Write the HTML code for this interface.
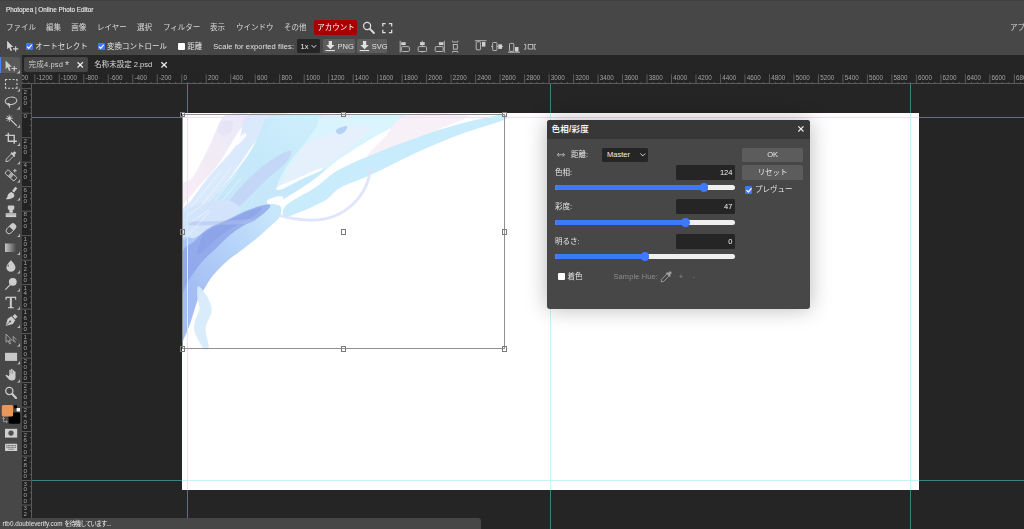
<!DOCTYPE html><html lang="ja"><head><meta charset="utf-8"><title>Photopea | Online Photo Editor</title><style>
*{box-sizing:border-box;margin:0;padding:0}
html,body{width:1024px;height:529px;overflow:hidden;background:#252525}
body{position:relative;font-family:"Liberation Sans","Noto Sans CJK JP",sans-serif;color:#e4e4e4;font-size:7.5px;line-height:1}
.abs{position:absolute}
#root{position:absolute;left:0;top:0;width:1024px;height:529px;overflow:hidden;filter:blur(0.01px)}
#top{position:absolute;left:0;top:0;width:1024px;height:54.5px;background:#474747}
#topline{position:absolute;left:0;top:0;width:1024px;height:1px;background:#404040}
#title{position:absolute;left:6px;top:6.8px;font-size:6.35px;color:#ebebeb;white-space:nowrap;-webkit-text-stroke:0.120px #ebebeb}
.mi{position:absolute;top:23.5px;font-size:7.5px;white-space:nowrap;color:#d8d8d8}
#acct{position:absolute;left:314px;top:20.400px;width:43.200px;height:15.100px;background:#a80000;border-radius:2px}
.opt{position:absolute;top:42.600px;font-size:7.5px;white-space:nowrap;color:#e2e2e2}
.cb{position:absolute;width:7px;height:7px;border-radius:1px;background:#fff}
.cb.on{background:#3b78f5}
.btn{position:absolute;background:#5c5c5c;border-radius:1.5px}
.sel{position:absolute;background:#252525;border-radius:1.5px}
#tools{position:absolute;left:0;top:54.5px;width:22px;height:475px;background:#474747}
#work{position:absolute;left:22px;top:54.5px;width:1002px;height:475px;background:#252525;border-top-left-radius:3px}
.tab{position:absolute;top:57px;height:15.2px;border-radius:2px;font-size:7.5px;white-space:nowrap}
.rl{position:absolute;font-size:6.3px;color:#a2a2a2;white-space:nowrap;line-height:1}
.gv{position:absolute;width:1px;background:#3c8286}
.gh{position:absolute;height:1px;background:#3c8286}
.h{position:absolute;width:5.3px;height:5.3px;border:0.7px solid #7c7c7c}
#dlg{position:absolute;left:547.2px;top:120px;width:262.8px;height:189.4px;background:#474747;border-radius:3px;box-shadow:0 0 21px rgba(0,0,0,.28)}
#dlgt{position:absolute;left:0;top:0;width:100%;height:18.6px;background:#373737;border-radius:3px 3px 0 0}
.dl{position:absolute;font-size:7.5px;white-space:nowrap;color:#e6e6e6}
.inp{position:absolute;left:128.8px;width:59px;height:15px;background:#252525;border-radius:1.5px}
.inp span{position:absolute;right:2.6px;top:4px;font-size:7.5px;color:#f0f0f0}
.trk{position:absolute;left:7.8px;width:180px;height:5px;border-radius:2.5px;background:#efefef}
.trk i{position:absolute;left:0;top:0;height:5px;border-radius:2.5px;background:#3f79fb}
.trk b{position:absolute;top:-1.9px;width:8.8px;height:8.8px;border-radius:50%;background:#3f79fb}
#status{position:absolute;left:0;top:517.5px;width:480.5px;height:12px;background:#474747;border-top-right-radius:3px;font-size:6.6px;color:#e8e8e8;white-space:nowrap}
</style></head><body><div id="root">
<div id="work"></div>
<div class="abs" id="cv" style="left:182.2px;top:113.2px;width:736.8px;height:376.5px;background:#fff;overflow:hidden">
<svg class="abs" style="left:0;top:0" width="736.8" height="376.5" viewBox="182.2 113.2 736.8 376.5">
<defs><filter id="b1" x="-10%" y="-10%" width="120%" height="120%"><feGaussianBlur stdDeviation="0.6"/></filter><filter id="b2" x="-20%" y="-20%" width="140%" height="140%"><feGaussianBlur stdDeviation="2.5"/></filter>
<linearGradient id="gA" x1="0" y1="1" x2="1" y2="0"><stop offset="0" stop-color="#c4e2fa"/><stop offset="0.5" stop-color="#c3e8fa"/><stop offset="1" stop-color="#d0f2fd"/></linearGradient>
<linearGradient id="gP" x1="0" y1="1" x2="1" y2="0"><stop offset="0" stop-color="#f8ebf3"/><stop offset="1" stop-color="#e6e7f8"/></linearGradient>
</defs>
<g filter="url(#b1)">
<path d="M226.5 115.0C231.8 113.2 248.7 111.7 250.4 115.0C252.1 118.3 242.0 126.7 236.7 135.0C231.4 143.2 224.6 156.1 218.6 164.5C212.5 172.8 205.7 178.8 200.4 184.9C195.1 191.0 189.8 197.4 186.8 200.8C183.9 204.2 183.4 208.0 182.7 205.3C182.0 202.7 181.1 189.4 182.7 184.9C184.4 180.4 189.3 181.9 192.5 178.1C195.6 174.3 198.5 167.9 201.6 162.2C204.6 156.5 207.8 150.1 210.6 144.0C213.5 138.0 215.9 130.7 218.6 125.9C221.2 121.0 221.2 116.8 226.5 115.0Z" fill="url(#gP)" fill-opacity="0.9" />
<path d="M248.1 115.0C254.5 110.7 276.1 110.9 277.6 115.0C279.1 119.1 264.0 130.5 257.2 139.5C250.4 148.5 243.5 159.6 236.7 169.0C229.9 178.5 223.1 187.9 216.3 196.2C209.5 204.6 201.5 213.6 195.9 218.9C190.3 224.2 184.9 229.5 182.7 228.0C180.5 226.5 181.3 214.4 182.7 209.9C184.2 205.3 188.0 204.9 191.3 200.8C194.7 196.6 198.9 189.8 202.7 184.9C206.5 180.0 210.3 175.6 214.0 171.3C217.8 166.9 221.2 163.9 225.4 158.8C229.6 153.7 235.2 147.9 239.0 140.6C242.8 133.3 241.7 119.3 248.1 115.0Z" fill="#d8e8fb" fill-opacity="0.95" />
<path d="M270.8 115.0C278.7 111.7 289.9 115.0 307.1 115.0C324.3 115.0 357.4 115.0 374.0 115.0C390.7 115.0 403.5 113.2 407.0 115.0C410.4 116.8 400.0 122.2 394.5 125.9C389.0 129.6 383.1 131.8 374.0 137.2C365.0 142.7 349.6 152.0 340.0 158.8C330.4 165.6 324.7 171.8 316.2 178.1C307.7 184.3 297.3 191.0 288.9 196.2C280.6 201.5 274.9 206.1 266.2 209.9C257.5 213.6 246.6 215.6 236.7 218.9C226.9 222.3 216.2 228.2 207.2 230.1C198.2 231.9 186.8 231.2 182.7 230.1C178.6 229.0 179.4 226.8 182.7 223.5C186.1 220.1 195.6 216.3 202.7 209.9C209.8 203.4 217.8 194.0 225.4 184.9C233.0 175.8 242.4 163.7 248.1 155.4C253.8 147.1 255.7 141.7 259.4 135.0C263.2 128.2 262.8 118.3 270.8 115.0Z" fill="url(#gA)" fill-opacity="0.95" />
<path d="M325.3 115.0C334.9 112.8 360.4 115.0 374.0 115.0C387.7 115.0 403.5 113.2 407.0 115.0C410.4 116.8 400.0 122.2 394.5 125.9C389.0 129.6 383.1 131.8 374.0 137.2C365.0 142.7 348.1 153.4 340.0 158.8C331.9 164.2 332.3 165.8 325.3 169.5C318.3 173.1 306.0 177.7 298.0 180.8C290.1 184.0 279.5 190.6 277.6 188.3C275.7 186.0 282.5 173.7 286.7 166.7C290.8 159.7 297.6 152.7 302.6 146.3C307.5 139.9 312.4 133.4 316.2 128.2C320.0 122.9 315.6 117.2 325.3 115.0Z" fill="#dbf5fd" fill-opacity="0.9" />
<path d="M307.1 144.0C313.9 139.1 326.6 135.7 334.3 132.7C342.1 129.7 347.8 126.3 353.6 125.9C359.5 125.5 371.8 125.5 369.5 130.4C367.2 135.3 348.1 148.9 340.0 155.4C331.9 161.9 329.2 164.8 320.7 169.5C312.2 174.1 295.8 180.1 288.9 183.1C282.1 186.0 279.1 190.6 279.9 187.2C280.6 183.7 288.9 169.4 293.5 162.2C298.0 155.0 300.3 149.0 307.1 144.0Z" fill="#e8effc" fill-opacity="0.75" />
<path d="M336.6 130.0C337.9 128.6 345.4 126.1 346.8 126.3C348.3 126.6 346.6 130.2 345.2 131.6C343.9 132.9 340.3 134.8 338.9 134.5C337.4 134.2 335.3 131.3 336.6 130.0Z" fill="#a9c9f2" fill-opacity="0.8" />
<path d="M218.6 123.6C220.5 121.3 230.1 119.8 232.2 121.3C234.3 122.9 233.0 130.4 231.1 132.7C229.2 135.0 222.9 136.5 220.9 135.0C218.8 133.5 216.7 125.9 218.6 123.6Z" fill="#dcdcf5" fill-opacity="0.4" />
<path d="M291.2 150.9C293.1 151.6 290.8 157.3 286.7 162.2C282.5 167.1 272.7 174.3 266.2 180.4C259.8 186.4 253.8 193.2 248.1 198.5C242.4 203.8 236.0 210.6 232.2 212.1C228.4 213.6 224.3 211.4 225.4 207.6C226.5 203.8 233.7 195.5 239.0 189.4C244.3 183.4 251.1 176.6 257.2 171.3C263.2 166.0 269.7 161.1 275.3 157.7C281.0 154.3 289.3 150.1 291.2 150.9Z" fill="#c3ccf4" fill-opacity="0.6" />
<g stroke="#fff" stroke-opacity="0.5" stroke-width="0.9" fill="none"><path d="M193.6 216.7L232.2 166.7"/><path d="M200.4 218.9L236.7 173.5"/><path d="M189.1 209.9L220.9 171.3"/><path d="M209.5 216.7L241.3 178.1"/></g>
<path d="M407.0 115.4C420.6 111.8 461.2 113.3 467.1 115.4C473.0 117.6 452.0 123.8 442.1 128.2C432.3 132.5 417.5 138.0 408.1 141.8C398.6 145.6 392.2 148.4 385.4 150.9C378.6 153.3 367.2 158.8 367.2 156.5C367.2 154.3 378.8 144.1 385.4 137.2C392.0 130.4 393.3 119.1 407.0 115.4Z" fill="#f8eff7" fill-opacity="0.95" />
<path d="M286.7 205.3C292.0 200.4 307.3 193.1 316.2 187.2C325.1 181.2 328.5 175.7 340.0 169.5C351.5 163.2 368.4 156.4 385.4 149.7C402.4 143.0 425.5 134.6 442.1 129.3C458.8 124.0 475.0 120.3 485.3 117.9C495.5 115.6 500.8 114.6 503.9 115.0C507.0 115.4 511.5 116.8 503.9 120.2C496.2 123.6 472.8 129.9 458.0 135.4C443.2 141.0 429.7 146.8 414.9 153.6C400.1 160.3 382.0 170.0 369.5 175.8C357.0 181.6 347.4 184.1 340.0 188.3C332.6 192.5 332.3 196.6 325.3 200.8C318.3 204.9 304.8 210.6 298.0 213.3C291.2 215.9 286.3 218.0 284.4 216.7C282.5 215.3 281.4 210.2 286.7 205.3Z" fill="#c6ebfb" fill-opacity="0.97" />
<path d="M277.6 187.2C280.4 185.2 291.0 181.2 298.0 178.1C305.0 175.0 315.8 169.8 319.6 168.6C323.4 167.3 323.6 169.0 320.7 170.8C317.9 172.6 309.2 176.0 302.6 179.2C295.9 182.4 285.2 188.6 281.0 189.9C276.8 191.2 274.8 189.1 277.6 187.2Z" fill="#ffffff" fill-opacity="0.9" />
<path d="M267.4 200.8C268.7 198.9 277.2 196.4 279.9 196.2C282.5 196.1 284.6 197.8 283.3 199.7C281.9 201.5 274.6 207.4 271.9 207.6C269.3 207.8 266.1 202.7 267.4 200.8Z" fill="#ffffff" fill-opacity="0.9" />
<path d="M234.5 141.8C235.6 139.9 242.7 134.8 244.7 133.8C246.7 132.9 247.4 134.2 246.3 136.1C245.1 138.0 239.8 144.2 237.9 145.2C235.9 146.1 233.3 143.7 234.5 141.8Z" fill="#ffffff" fill-opacity="0.85" />
<path d="M370.7 167C369 195 345 221 311 220.3C298 220 288 218 279.5 215.5" fill="none" stroke="#dde4fa" stroke-width="2.8" stroke-opacity="0.95"/>
<path d="M182.0 215.0C185.0 207.5 192.8 207.5 200.0 205.0C207.2 202.5 218.3 199.2 225.0 200.0C231.7 200.8 241.7 205.3 240.0 210.0C238.3 214.7 222.5 223.0 215.0 228.0C207.5 233.0 200.5 236.3 195.0 240.0C189.5 243.7 184.2 254.2 182.0 250.0C179.8 245.8 179.0 222.5 182.0 215.0Z" fill="#d3e4fb" fill-opacity="0.95" />
<linearGradient id="gM" gradientUnits="userSpaceOnUse" x1="190" y1="290" x2="275" y2="215"><stop offset="0" stop-color="#9fb9f2"/><stop offset="0.6" stop-color="#b3d4f9"/><stop offset="1" stop-color="#c6e6fb"/></linearGradient>
<path d="M182.0 246.0C184.2 229.2 189.5 241.2 195.0 238.0C200.5 234.8 207.5 230.9 215.0 227.0C222.5 223.1 232.2 218.2 240.0 214.5C247.8 210.8 255.3 206.4 262.0 205.0C268.7 203.6 277.1 203.9 280.0 206.0C282.9 208.1 281.3 213.8 279.6 217.3C277.9 220.8 274.0 223.2 270.0 227.0C266.0 230.8 260.3 235.8 255.5 239.8C250.7 243.8 245.6 247.5 241.0 251.0C236.4 254.5 232.6 256.7 228.0 260.7C223.4 264.7 217.6 270.3 213.7 275.0C209.8 279.7 207.1 285.1 204.6 289.0C202.1 292.9 200.7 293.2 198.4 298.7C196.1 304.2 193.4 315.3 191.0 322.0C188.6 328.7 185.5 336.2 184.0 339.0C182.5 341.8 182.3 354.5 182.0 339.0C181.7 323.5 179.8 262.8 182.0 246.0Z" fill="url(#gM)" fill-opacity="0.95" />
<path d="M182.2 254.0C184.2 245.6 190.3 245.5 194.5 241.4C198.7 237.3 201.7 233.0 207.3 229.4C212.9 225.8 221.2 222.9 228.2 219.7C235.1 216.5 242.6 212.5 249.0 210.0C255.4 207.5 263.2 205.2 266.7 204.8C270.2 204.4 271.6 205.3 270.0 207.7C268.4 210.1 261.8 215.7 257.0 219.0C252.2 222.3 245.8 224.5 241.0 227.5C236.2 230.5 232.5 233.3 228.2 237.0C223.9 240.7 219.3 245.6 215.3 249.4C211.3 253.2 207.2 256.6 204.0 260.0C200.8 263.4 198.7 266.3 196.0 270.0C193.3 273.7 190.3 278.3 188.0 282.0C185.7 285.7 183.2 296.7 182.2 292.0C181.2 287.3 180.1 262.4 182.2 254.0Z" fill="#8a9fe8" fill-opacity="0.72" />
<path d="M207.3 231.0C212.0 227.3 221.2 224.2 228.2 221.0C235.1 217.8 243.4 213.8 249.0 211.5C254.6 209.2 261.0 206.8 262.0 207.5C263.0 208.2 259.0 213.1 255.0 216.0C251.0 218.9 243.5 221.8 238.0 225.0C232.5 228.2 227.0 231.3 222.0 235.0C217.0 238.7 212.0 243.7 208.0 247.0C204.0 250.3 199.3 255.7 198.0 255.0C196.7 254.3 198.4 247.0 200.0 243.0C201.6 239.0 202.6 234.7 207.3 231.0Z" fill="#7f94e4" fill-opacity="0.35" />
<path d="M190.0 222.0C193.8 221.3 206.7 221.8 215.0 221.5C223.3 221.2 233.2 220.4 240.0 220.0C246.8 219.6 254.3 218.4 256.0 219.0C257.7 219.6 255.2 222.5 250.0 223.5C244.8 224.5 234.7 224.7 225.0 225.0C215.3 225.3 197.8 226.0 192.0 225.5C186.2 225.0 186.2 222.7 190.0 222.0Z" fill="#aebff0" fill-opacity="0.5" />
<g stroke="#fff" stroke-opacity="0.6" stroke-width="0.8" fill="none"><path d="M189.1 223.5L209.5 209.9"/><path d="M186.8 216.7L205.0 203.1"/><path d="M184.0 240.0L210.0 212.0"/></g>
<path d="M198.4 286.4C200.0 286.0 204.8 292.2 207.0 296.3C209.3 300.3 212.1 305.7 211.9 311.0C211.7 316.3 206.3 322.1 205.8 328.2C205.3 334.3 209.4 344.1 209.0 347.4C208.6 350.6 205.6 350.2 203.3 347.9C201.0 345.5 196.7 337.2 195.2 333.1C193.8 329.0 194.0 327.4 194.7 323.3C195.5 319.2 199.2 312.6 199.7 308.5C200.1 304.4 197.9 302.4 197.7 298.7C197.5 295.0 196.9 286.8 198.4 286.4Z" fill="#d6ebfb" fill-opacity="0.95" />
</g></svg>
</div>
<div class="abs" style="left:22px;top:73.4px;width:1002px;height:10.4px;background:#242424;border-bottom:0.8px solid #5a5a5a"></div>
<div class="abs" style="left:22px;top:83.8px;width:9.6px;height:446px;background:#222;border-right:0.8px solid #5a5a5a"></div>
<svg class="abs" style="left:0;top:0" width="1024" height="529">
<path d="M22.58 82V83.6M28.70 82V83.6M34.82 74.3V83.6M40.94 82V83.6M47.07 82V83.6M53.19 82V83.6M59.31 74.3V83.6M65.43 82V83.6M71.55 82V83.6M77.68 82V83.6M83.80 74.3V83.6M89.92 82V83.6M96.04 82V83.6M102.16 82V83.6M108.29 74.3V83.6M114.41 82V83.6M120.53 82V83.6M126.65 82V83.6M132.77 74.3V83.6M138.90 82V83.6M145.02 82V83.6M151.14 82V83.6M157.26 74.3V83.6M163.38 82V83.6M169.51 82V83.6M175.63 82V83.6M181.75 74.3V83.6M187.87 82V83.6M193.99 82V83.6M200.12 82V83.6M206.24 74.3V83.6M212.36 82V83.6M218.48 82V83.6M224.60 82V83.6M230.73 74.3V83.6M236.85 82V83.6M242.97 82V83.6M249.09 82V83.6M255.21 74.3V83.6M261.34 82V83.6M267.46 82V83.6M273.58 82V83.6M279.70 74.3V83.6M285.82 82V83.6M291.95 82V83.6M298.07 82V83.6M304.19 74.3V83.6M310.31 82V83.6M316.43 82V83.6M322.56 82V83.6M328.68 74.3V83.6M334.80 82V83.6M340.92 82V83.6M347.04 82V83.6M353.17 74.3V83.6M359.29 82V83.6M365.41 82V83.6M371.53 82V83.6M377.65 74.3V83.6M383.78 82V83.6M389.90 82V83.6M396.02 82V83.6M402.14 74.3V83.6M408.26 82V83.6M414.39 82V83.6M420.51 82V83.6M426.63 74.3V83.6M432.75 82V83.6M438.87 82V83.6M445.00 82V83.6M451.12 74.3V83.6M457.24 82V83.6M463.36 82V83.6M469.48 82V83.6M475.61 74.3V83.6M481.73 82V83.6M487.85 82V83.6M493.97 82V83.6M500.09 74.3V83.6M506.22 82V83.6M512.34 82V83.6M518.46 82V83.6M524.58 74.3V83.6M530.70 82V83.6M536.83 82V83.6M542.95 82V83.6M549.07 74.3V83.6M555.19 82V83.6M561.31 82V83.6M567.44 82V83.6M573.56 74.3V83.6M579.68 82V83.6M585.80 82V83.6M591.92 82V83.6M598.05 74.3V83.6M604.17 82V83.6M610.29 82V83.6M616.41 82V83.6M622.53 74.3V83.6M628.66 82V83.6M634.78 82V83.6M640.90 82V83.6M647.02 74.3V83.6M653.14 82V83.6M659.27 82V83.6M665.39 82V83.6M671.51 74.3V83.6M677.63 82V83.6M683.75 82V83.6M689.88 82V83.6M696.00 74.3V83.6M702.12 82V83.6M708.24 82V83.6M714.36 82V83.6M720.49 74.3V83.6M726.61 82V83.6M732.73 82V83.6M738.85 82V83.6M744.97 74.3V83.6M751.10 82V83.6M757.22 82V83.6M763.34 82V83.6M769.46 74.3V83.6M775.58 82V83.6M781.71 82V83.6M787.83 82V83.6M793.95 74.3V83.6M800.07 82V83.6M806.19 82V83.6M812.32 82V83.6M818.44 74.3V83.6M824.56 82V83.6M830.68 82V83.6M836.80 82V83.6M842.93 74.3V83.6M849.05 82V83.6M855.17 82V83.6M861.29 82V83.6M867.41 74.3V83.6M873.54 82V83.6M879.66 82V83.6M885.78 82V83.6M891.90 74.3V83.6M898.02 82V83.6M904.15 82V83.6M910.27 82V83.6M916.39 74.3V83.6M922.51 82V83.6M928.63 82V83.6M934.76 82V83.6M940.88 74.3V83.6M947.00 82V83.6M953.12 82V83.6M959.24 82V83.6M965.37 74.3V83.6M971.49 82V83.6M977.61 82V83.6M983.73 82V83.6M989.85 74.3V83.6M995.98 82V83.6M1002.10 82V83.6M1008.22 82V83.6M1014.34 74.3V83.6M1020.46 82V83.6" stroke="#686868" stroke-width="0.8" fill="none"/>
<path d="M22 88.71H31.4M29.8 94.83H31.4M29.8 100.96H31.4M29.8 107.08H31.4M22 113.20H31.4M29.8 119.32H31.4M29.8 125.44H31.4M29.8 131.57H31.4M22 137.69H31.4M29.8 143.81H31.4M29.8 149.93H31.4M29.8 156.05H31.4M22 162.18H31.4M29.8 168.30H31.4M29.8 174.42H31.4M29.8 180.54H31.4M22 186.66H31.4M29.8 192.79H31.4M29.8 198.91H31.4M29.8 205.03H31.4M22 211.15H31.4M29.8 217.27H31.4M29.8 223.40H31.4M29.8 229.52H31.4M22 235.64H31.4M29.8 241.76H31.4M29.8 247.88H31.4M29.8 254.01H31.4M22 260.13H31.4M29.8 266.25H31.4M29.8 272.37H31.4M29.8 278.49H31.4M22 284.62H31.4M29.8 290.74H31.4M29.8 296.86H31.4M29.8 302.98H31.4M22 309.10H31.4M29.8 315.23H31.4M29.8 321.35H31.4M29.8 327.47H31.4M22 333.59H31.4M29.8 339.71H31.4M29.8 345.84H31.4M29.8 351.96H31.4M22 358.08H31.4M29.8 364.20H31.4M29.8 370.32H31.4M29.8 376.45H31.4M22 382.57H31.4M29.8 388.69H31.4M29.8 394.81H31.4M29.8 400.93H31.4M22 407.06H31.4M29.8 413.18H31.4M29.8 419.30H31.4M29.8 425.42H31.4M22 431.54H31.4M29.8 437.67H31.4M29.8 443.79H31.4M29.8 449.91H31.4M22 456.03H31.4M29.8 462.15H31.4M29.8 468.28H31.4M29.8 474.40H31.4M22 480.52H31.4M29.8 486.64H31.4M29.8 492.76H31.4M29.8 498.89H31.4M22 505.01H31.4M29.8 511.13H31.4" stroke="#686868" stroke-width="0.8" fill="none"/>
</svg>
<div class="abs" style="left:22px;top:73.4px;width:1002px;height:10px;overflow:hidden">
<div class="rl" style="left:-9.97px;top:1.3px">-1400</div>
<div class="rl" style="left:14.52px;top:1.3px">-1200</div>
<div class="rl" style="left:39.01px;top:1.3px">-1000</div>
<div class="rl" style="left:63.50px;top:1.3px">-800</div>
<div class="rl" style="left:87.99px;top:1.3px">-600</div>
<div class="rl" style="left:112.47px;top:1.3px">-400</div>
<div class="rl" style="left:136.96px;top:1.3px">-200</div>
<div class="rl" style="left:161.45px;top:1.3px">0</div>
<div class="rl" style="left:185.94px;top:1.3px">200</div>
<div class="rl" style="left:210.43px;top:1.3px">400</div>
<div class="rl" style="left:234.91px;top:1.3px">600</div>
<div class="rl" style="left:259.40px;top:1.3px">800</div>
<div class="rl" style="left:283.89px;top:1.3px">1000</div>
<div class="rl" style="left:308.38px;top:1.3px">1200</div>
<div class="rl" style="left:332.87px;top:1.3px">1400</div>
<div class="rl" style="left:357.35px;top:1.3px">1600</div>
<div class="rl" style="left:381.84px;top:1.3px">1800</div>
<div class="rl" style="left:406.33px;top:1.3px">2000</div>
<div class="rl" style="left:430.82px;top:1.3px">2200</div>
<div class="rl" style="left:455.31px;top:1.3px">2400</div>
<div class="rl" style="left:479.79px;top:1.3px">2600</div>
<div class="rl" style="left:504.28px;top:1.3px">2800</div>
<div class="rl" style="left:528.77px;top:1.3px">3000</div>
<div class="rl" style="left:553.26px;top:1.3px">3200</div>
<div class="rl" style="left:577.75px;top:1.3px">3400</div>
<div class="rl" style="left:602.23px;top:1.3px">3600</div>
<div class="rl" style="left:626.72px;top:1.3px">3800</div>
<div class="rl" style="left:651.21px;top:1.3px">4000</div>
<div class="rl" style="left:675.70px;top:1.3px">4200</div>
<div class="rl" style="left:700.19px;top:1.3px">4400</div>
<div class="rl" style="left:724.67px;top:1.3px">4600</div>
<div class="rl" style="left:749.16px;top:1.3px">4800</div>
<div class="rl" style="left:773.65px;top:1.3px">5000</div>
<div class="rl" style="left:798.14px;top:1.3px">5200</div>
<div class="rl" style="left:822.63px;top:1.3px">5400</div>
<div class="rl" style="left:847.11px;top:1.3px">5600</div>
<div class="rl" style="left:871.60px;top:1.3px">5800</div>
<div class="rl" style="left:896.09px;top:1.3px">6000</div>
<div class="rl" style="left:920.58px;top:1.3px">6200</div>
<div class="rl" style="left:945.07px;top:1.3px">6400</div>
<div class="rl" style="left:969.55px;top:1.3px">6600</div>
<div class="rl" style="left:994.04px;top:1.3px">6800</div>
</div>
<div class="rl" style="left:23.6px;top:88.91px;font-size:6.2px">2</div>
<div class="rl" style="left:23.6px;top:94.56px;font-size:6.2px">0</div>
<div class="rl" style="left:23.6px;top:100.21px;font-size:6.2px">0</div>
<div class="rl" style="left:23.6px;top:113.40px;font-size:6.2px">0</div>
<div class="rl" style="left:23.6px;top:137.89px;font-size:6.2px">2</div>
<div class="rl" style="left:23.6px;top:143.54px;font-size:6.2px">0</div>
<div class="rl" style="left:23.6px;top:149.19px;font-size:6.2px">0</div>
<div class="rl" style="left:23.6px;top:162.38px;font-size:6.2px">4</div>
<div class="rl" style="left:23.6px;top:168.03px;font-size:6.2px">0</div>
<div class="rl" style="left:23.6px;top:173.68px;font-size:6.2px">0</div>
<div class="rl" style="left:23.6px;top:186.86px;font-size:6.2px">6</div>
<div class="rl" style="left:23.6px;top:192.51px;font-size:6.2px">0</div>
<div class="rl" style="left:23.6px;top:198.16px;font-size:6.2px">0</div>
<div class="rl" style="left:23.6px;top:211.35px;font-size:6.2px">8</div>
<div class="rl" style="left:23.6px;top:217.00px;font-size:6.2px">0</div>
<div class="rl" style="left:23.6px;top:222.65px;font-size:6.2px">0</div>
<div class="rl" style="left:23.6px;top:235.84px;font-size:6.2px">1</div>
<div class="rl" style="left:23.6px;top:241.49px;font-size:6.2px">0</div>
<div class="rl" style="left:23.6px;top:247.14px;font-size:6.2px">0</div>
<div class="rl" style="left:23.6px;top:252.79px;font-size:6.2px">0</div>
<div class="rl" style="left:23.6px;top:260.33px;font-size:6.2px">1</div>
<div class="rl" style="left:23.6px;top:265.98px;font-size:6.2px">2</div>
<div class="rl" style="left:23.6px;top:271.63px;font-size:6.2px">0</div>
<div class="rl" style="left:23.6px;top:277.28px;font-size:6.2px">0</div>
<div class="rl" style="left:23.6px;top:284.82px;font-size:6.2px">1</div>
<div class="rl" style="left:23.6px;top:290.47px;font-size:6.2px">4</div>
<div class="rl" style="left:23.6px;top:296.12px;font-size:6.2px">0</div>
<div class="rl" style="left:23.6px;top:301.77px;font-size:6.2px">0</div>
<div class="rl" style="left:23.6px;top:309.30px;font-size:6.2px">1</div>
<div class="rl" style="left:23.6px;top:314.95px;font-size:6.2px">6</div>
<div class="rl" style="left:23.6px;top:320.60px;font-size:6.2px">0</div>
<div class="rl" style="left:23.6px;top:326.25px;font-size:6.2px">0</div>
<div class="rl" style="left:23.6px;top:333.79px;font-size:6.2px">1</div>
<div class="rl" style="left:23.6px;top:339.44px;font-size:6.2px">8</div>
<div class="rl" style="left:23.6px;top:345.09px;font-size:6.2px">0</div>
<div class="rl" style="left:23.6px;top:350.74px;font-size:6.2px">0</div>
<div class="rl" style="left:23.6px;top:358.28px;font-size:6.2px">2</div>
<div class="rl" style="left:23.6px;top:363.93px;font-size:6.2px">0</div>
<div class="rl" style="left:23.6px;top:369.58px;font-size:6.2px">0</div>
<div class="rl" style="left:23.6px;top:375.23px;font-size:6.2px">0</div>
<div class="rl" style="left:23.6px;top:382.77px;font-size:6.2px">2</div>
<div class="rl" style="left:23.6px;top:388.42px;font-size:6.2px">2</div>
<div class="rl" style="left:23.6px;top:394.07px;font-size:6.2px">0</div>
<div class="rl" style="left:23.6px;top:399.72px;font-size:6.2px">0</div>
<div class="rl" style="left:23.6px;top:407.26px;font-size:6.2px">2</div>
<div class="rl" style="left:23.6px;top:412.91px;font-size:6.2px">4</div>
<div class="rl" style="left:23.6px;top:418.56px;font-size:6.2px">0</div>
<div class="rl" style="left:23.6px;top:424.21px;font-size:6.2px">0</div>
<div class="rl" style="left:23.6px;top:431.74px;font-size:6.2px">2</div>
<div class="rl" style="left:23.6px;top:437.39px;font-size:6.2px">6</div>
<div class="rl" style="left:23.6px;top:443.04px;font-size:6.2px">0</div>
<div class="rl" style="left:23.6px;top:448.69px;font-size:6.2px">0</div>
<div class="rl" style="left:23.6px;top:456.23px;font-size:6.2px">2</div>
<div class="rl" style="left:23.6px;top:461.88px;font-size:6.2px">8</div>
<div class="rl" style="left:23.6px;top:467.53px;font-size:6.2px">0</div>
<div class="rl" style="left:23.6px;top:473.18px;font-size:6.2px">0</div>
<div class="rl" style="left:23.6px;top:480.72px;font-size:6.2px">3</div>
<div class="rl" style="left:23.6px;top:486.37px;font-size:6.2px">0</div>
<div class="rl" style="left:23.6px;top:492.02px;font-size:6.2px">0</div>
<div class="rl" style="left:23.6px;top:497.67px;font-size:6.2px">0</div>
<div class="rl" style="left:23.6px;top:505.21px;font-size:6.2px">3</div>
<div class="rl" style="left:23.6px;top:510.86px;font-size:6.2px">2</div>
<div class="gv" style="left:187.0px;top:84px;height:445px"></div>
<div class="gv" style="left:550.0px;top:84px;height:445px"></div>
<div class="gv" style="left:910.4px;top:84px;height:445px"></div>
<div class="gh" style="top:116.9px;left:31.6px;width:993px"></div>
<div class="gh" style="top:480.0px;left:31.6px;width:993px"></div>
<div class="gv" style="left:187.0px;top:113.2px;height:376.5px;background:#c6f4f7"></div>
<div class="gv" style="left:550.0px;top:113.2px;height:376.5px;background:#c6f4f7"></div>
<div class="gv" style="left:910.4px;top:113.2px;height:376.5px;background:#c6f4f7"></div>
<div class="gh" style="top:116.9px;left:182.2px;width:736.8px;background:#c6f4f7"></div>
<div class="gh" style="top:480.0px;left:182.2px;width:736.8px;background:#c6f4f7"></div>
<div class="abs" style="left:182px;top:114.3px;width:322.8px;height:235.2px;border:0.8px solid #909090"></div>
<div class="h" style="left:179.5px;top:112.1px"></div>
<div class="h" style="left:340.6px;top:112.1px"></div>
<div class="h" style="left:501.7px;top:112.1px"></div>
<div class="h" style="left:179.5px;top:229.3px"></div>
<div class="h" style="left:340.6px;top:229.3px"></div>
<div class="h" style="left:501.7px;top:229.3px"></div>
<div class="h" style="left:179.5px;top:346.4px"></div>
<div class="h" style="left:340.6px;top:346.4px"></div>
<div class="h" style="left:501.7px;top:346.4px"></div>
<div class="tab" style="left:24px;width:63.6px;background:#474747"></div>
<div class="tab" style="left:28.6px;top:60.6px;color:#cfcfcf;background:none;letter-spacing:0.15px">完成4.psd <span style="font-size:10.500px;line-height:0;position:relative;top:2.600px;left:-0.300px">*</span></div>
<div class="tab" style="left:94.2px;top:60.600px;color:#dadada;background:none">名称未設定 2.psd</div>
<svg class="abs" style="left:0;top:0" width="200" height="80"><path d="M77.500 62.200l5.400 5.300M82.900 62.200l-5.400 5.300M161.400 62.200l5.400 5.300M166.800 62.200l-5.400 5.300" stroke="#ececec" stroke-width="1.200" fill="none"/></svg>
<div id="top"><div id="topline"></div>
<div id="title">Photopea | Online Photo Editor</div>
<div id="acct"></div>
<div class="mi" style="left:6.0px">ファイル</div>
<div class="mi" style="left:46.0px">編集</div>
<div class="mi" style="left:71.3px">画像</div>
<div class="mi" style="left:97.0px">レイヤー</div>
<div class="mi" style="left:137.0px">選択</div>
<div class="mi" style="left:163.0px">フィルター</div>
<div class="mi" style="left:210.0px">表示</div>
<div class="mi" style="left:236.0px">ウインドウ</div>
<div class="mi" style="left:284.0px">その他</div>
<div class="mi" style="left:317.2px;color:#fff">アカウント</div>
<div class="abs" style="top:23.5px;font-size:7.5px;color:#d8d8d8;white-space:nowrap;left:1010px">アプリ</div>
<div class="cb on" style="left:25.8px;top:43.2px"></div><div class="opt" style="left:35.2px">オートセレクト</div>
<div class="cb on" style="left:97.7px;top:43.2px"></div><div class="opt" style="left:107px">変換コントロール</div>
<div class="cb" style="left:178.2px;top:43.2px"></div><div class="opt" style="left:187.3px">距離</div>
<div class="opt" style="left:213.2px;letter-spacing:0.1px">Scale for exported files:</div>
<div class="sel" style="left:296.6px;top:39px;width:23.6px;height:14.4px"></div><div class="opt" style="left:300.5px;color:#f0f0f0">1x</div>
<div class="btn" style="left:323px;top:39px;width:31.8px;height:14.4px"></div><div class="opt" style="left:337.5px;color:#e0e0e0">PNG</div>
<div class="btn" style="left:357.4px;top:39px;width:29.8px;height:14.4px"></div><div class="opt" style="left:371.7px;color:#e0e0e0">SVG</div>
<svg class="abs" style="left:0;top:0" width="1024" height="55" viewBox="0 0 1024 55">
<!-- move tool icon -->
<g fill="#d2d2d2" stroke="none">
<path d="M7.1 40.7v8.6l2-1.8 1.5 3.6 1.5-.65-1.5-3.5h2.7z"/>
<path d="M15.1 46.2h1.1v2.1h2.1v1.1h-2.1v2.1h-1.1v-2.1h-2.1v-1.1h2.1z"/>
</g>
<!-- check marks -->
<g fill="none" stroke="#fff" stroke-width="1.15" stroke-linecap="round" stroke-linejoin="round">
<path d="M27.3 46.8l1.5 1.5 2.7-3.2"/>
<path d="M99.2 46.8l1.5 1.5 2.7-3.2"/>
</g>
<!-- select chevron -->
<path d="M311.6 45.2l2.3 2.3 2.3-2.3" fill="none" stroke="#eee" stroke-width="0.95"/>
<!-- download icons -->
<g fill="#e0e0e0">
<path d="M328.7 41h3.3v4h2.6l-4.25 4.2-4.25-4.2h2.6z"/><rect x="325.5" y="50" width="9.4" height="1.05"/>
<path d="M362.9 41h3.3v4h2.6l-4.25 4.2-4.25-4.2h2.6z"/><rect x="359.7" y="50" width="9.4" height="1.05"/>
</g>
<!-- search -->
<g fill="none" stroke="#dedede">
<circle cx="367.1" cy="26" r="3.55" stroke-width="1.25"/>
<path d="M369.9 28.9l4 4.1" stroke-width="1.9" stroke-linecap="round"/>
</g>
<!-- fullscreen -->
<path d="M382.8 26.4v-2.8h2.8M388.9 23.6h2.8v2.8M391.7 29.7v2.8h-2.8M385.6 32.5h-2.8v-2.8" fill="none" stroke="#dedede" stroke-width="1.25"/>
<!-- align icons -->
<g fill="none" stroke="#c2c2c2" stroke-width="0.9">
<path d="M400.2 40.8v11.8"/><rect x="401.4" y="46.6" width="8" height="4.9" rx="1"/>
<path d="M422.3 40.8v1.4M422.3 45v1.6M422.3 51.5v1.1"/><rect x="418.2" y="46.6" width="8.4" height="4.9" rx="1"/>
<path d="M444.3 40.8v11.8"/><rect x="435.2" y="46.6" width="8" height="4.9" rx="1"/>
<path d="M452.6 40.7v1.3h5.2v-1.3M452.6 52.7v-1.3h5.2v1.3"/><rect x="453.3" y="44.5" width="4" height="4.6"/>
<path d="M474.8 40.7h11.6"/><rect x="476.2" y="41.8" width="4.4" height="8" rx="0.8"/>
<path d="M491 46.5h1.2M497.2 46.5h1.2M502 46.5h1.1"/><rect x="492.6" y="42.5" width="4.3" height="8" rx="0.8"/>
<path d="M508 52.2h12"/><rect x="509.5" y="43.4" width="4.3" height="8" rx="0.8"/>
<path d="M524 44.4h1.7v4.8h-1.7M536 44.4h-1.7v4.8h1.7"/><rect x="528.2" y="44.5" width="4.6" height="4.5"/>
</g>
<g fill="#cfcfcf">
<rect x="401.2" y="42.2" width="4.5" height="2.9"/>
<rect x="420" y="42.1" width="4.7" height="3"/>
<rect x="438.9" y="42.2" width="4.5" height="2.9"/>
<rect x="482" y="42" width="3.4" height="4.6"/>
<rect x="498.3" y="44.3" width="3.7" height="4.6"/>
<rect x="515" y="47" width="3.5" height="4.6"/>
</g>
</svg>

</div>
<div id="tools">
<div class="abs" style="left:0;top:2.6px;width:20.2px;height:16.4px;background:#595959;border-radius:0 2.5px 2.5px 0"></div>
<div class="abs" style="left:0;top:2.6px;width:1.4px;height:16.4px;background:#4d82f7"></div>
</div>
<svg class="abs" style="left:0;top:0" width="22" height="529" viewBox="0 0 22 529">
<path d="M19.900 69.6v3.800h-3.800q3-.3 3.800-3.800z" fill="#cfcfcf"/>
<path d="M19.900 87.8v3.800h-3.800q3-.3 3.800-3.800z" fill="#cfcfcf"/>
<path d="M19.900 105.6v3.800h-3.800q3-.3 3.800-3.800z" fill="#cfcfcf"/>
<path d="M19.900 124.0v3.800h-3.800q3-.3 3.800-3.800z" fill="#cfcfcf"/>
<path d="M19.900 142.3v3.800h-3.800q3-.3 3.800-3.800z" fill="#cfcfcf"/>
<path d="M19.900 160.5v3.800h-3.800q3-.3 3.800-3.800z" fill="#cfcfcf"/>
<path d="M19.900 178.8v3.800h-3.800q3-.3 3.800-3.800z" fill="#cfcfcf"/>
<path d="M19.900 196.8v3.800h-3.800q3-.3 3.800-3.800z" fill="#cfcfcf"/>
<path d="M19.900 233.3v3.800h-3.800q3-.3 3.800-3.800z" fill="#cfcfcf"/>
<path d="M19.900 251.3v3.800h-3.800q3-.3 3.800-3.800z" fill="#cfcfcf"/>
<path d="M19.900 269.7v3.800h-3.800q3-.3 3.800-3.800z" fill="#cfcfcf"/>
<path d="M19.900 287.8v3.800h-3.800q3-.3 3.800-3.800z" fill="#cfcfcf"/>
<path d="M19.900 305.9v3.800h-3.800q3-.3 3.800-3.800z" fill="#cfcfcf"/>
<path d="M19.900 324.3v3.800h-3.800q3-.3 3.800-3.800z" fill="#cfcfcf"/>
<path d="M19.900 342.7v3.800h-3.800q3-.3 3.800-3.800z" fill="#cfcfcf"/>
<path d="M19.900 360.5v3.800h-3.800q3-.3 3.800-3.800z" fill="#cfcfcf"/>
<path d="M19.900 378.8v3.800h-3.800q3-.3 3.800-3.800z" fill="#cfcfcf"/>
<g fill="#cdcdcd"><path d="M5.6 60.5v8.6l2-1.8 1.5 3.6 1.5-.65-1.5-3.5h2.7z"/><path d="M13.7 65.9h1.1v2.1h2.1v1.1h-2.1v2.1h-1.1v-2.1h-2.1v-1.1h2.1z"/></g>
<path d="M5.5 81.2v-1.7h1.8M8.8 79.5h2M12.6 79.5h2M16.1 79.5h.9v1.7M17 83v2M17 86.6v1.7h-1.7M13.8 88.3h-2M10 88.3h-2M6.6 88.3h-1.1v-1.7M5.5 85v-2" fill="none" stroke="#cdcdcd" stroke-width="1.1"/>
<g fill="none" stroke="#cdcdcd" stroke-width="0.95"><ellipse cx="11" cy="100.8" rx="5.9" ry="3.7" transform="rotate(-8 11 100.8)"/><path d="M9.6 103.9q-1.9-1-1.7.3t1.4 1.2q.9 1.3 0 2.2" stroke-width="1.1"/></g>
<g stroke="#cdcdcd" fill="none"><path d="M10.8 119.8l6 6" stroke-width="1.2"/><path d="M9.3 114.6v7.4M5.6 118.3h7.4M6.7 115.7l5.2 5.2M11.9 115.7l-5.2 5.2" stroke-width="0.8"/></g><circle cx="9.3" cy="118.3" r="1.7" fill="#cdcdcd"/>
<path d="M5.3 135.4h8.9v8.4M8.3 132.8v8.4h8.6" fill="none" stroke="#cdcdcd" stroke-width="1.35"/>
<g transform="translate(11 156.5) rotate(45)"><path d="M-1.3 -6.2h2.6v2.6h1.3v1.6h-5.2v-1.6h1.3z" fill="#cdcdcd"/><path d="M-1.5 -2v7.2l1.5 2 1.5-2v-7.2" fill="none" stroke="#cdcdcd" stroke-width="0.85"/></g>
<g transform="translate(10.9 175.4) rotate(41)"><rect x="-6.1" y="-2.4" width="12.2" height="4.8" rx="1.2" fill="none" stroke="#cdcdcd" stroke-width="0.9"/><rect x="-1.9" y="-2.4" width="3.8" height="4.8" fill="#a9a9a9"/></g><path d="M14.9 168.9v3.6M13.1 170.7h3.6" stroke="#cdcdcd" stroke-width="0.9" fill="none"/>
<g fill="#cdcdcd"><path d="M15.3 186.7l2 1.6-3.2 4.2-2-1.6z"/><path d="M11.5 191.9l2.4 1.9q1.5 3-2 4.500t-6.300.6q1.900-1 2-3.200t3.900-3.800z"/></g>
<g fill="#cdcdcd"><path d="M8.6 205.4h4.9q.8 0 .8.8v2.3q0 1-1.5 1.6v2.6h-3.5v-2.6q-1.5-.6-1.5-1.6v-2.3q0-.8.8-.8z"/><rect x="5.700" y="213" width="10.500" height="4.100" fill="url(#gs)"/></g>
<g transform="translate(11 228.700) rotate(-47)"><rect x="-5.800" y="-2.900" width="11.600" height="5.800" rx="2.900" fill="none" stroke="#cdcdcd" stroke-width="0.900"/><path d="M0.400 -2.900h2.500a2.900 2.900 0 0 1 0 5.800h-2.500z" fill="#cdcdcd"/></g>
<defs><linearGradient id="gs" x1="0" x2="0" y1="0" y2="1"><stop offset="0" stop-color="#a8a8a8"/><stop offset="1" stop-color="#d6d6d6"/></linearGradient><linearGradient id="gr" x1="0" x2="1" y1="0" y2="0"><stop offset="0" stop-color="#c6c6c6"/><stop offset="1" stop-color="#c6c6c6" stop-opacity="0"/></linearGradient></defs><rect x="5" y="243.5" width="11.3" height="8.5" fill="url(#gr)"/>
<path d="M10.9 260.2q4.5 4.4 4.5 7.2a4.5 4.3 0 0 1-9 0q0-2.8 4.5-7.2z" fill="#cdcdcd"/><path d="M8.6 264.6q-1 1.3-.3 2.2" stroke="#555" stroke-width="0.9" fill="none"/>
<circle cx="12.8" cy="281.8" r="3.9" fill="#cdcdcd"/><path d="M10.3 284.7l-4.9 4.9" stroke="#cdcdcd" stroke-width="1.2" fill="none"/>
<text x="11" y="307.700" font-family="Liberation Serif, serif" font-size="16" text-anchor="middle" fill="#cdcdcd" stroke="#cdcdcd" stroke-width="0.350" transform="translate(11 0) scale(1.1 1) translate(-11 0)">T</text>
<g transform="translate(11 320.600) rotate(45)"><path d="M-1.900 -7.400h3.800v3.300h-3.800z" fill="#cdcdcd"/><path d="M-2.700 -3.300h5.400l1 4.300-3.700 6.700-3.700-6.700z" fill="#cdcdcd"/><path d="M0 7v-5.400" stroke="#474747" stroke-width="0.700"/><circle cx="0" cy="1.200" r="0.950" fill="#474747"/></g>
<g fill="none" stroke="#a8a8a8" stroke-width="0.9"><path d="M6 334v8.3l2-1.8 1.6 3.5 1.1-.5-1.6-3.4h2.6z"/><path d="M13.2 336.4v5l1.2-1 1 2.3M13.2 336.4l3 3.2"/></g>
<rect x="5" y="352.8" width="12.1" height="8.1" fill="#c8c8c8"/>
<path d="M9.3 375v-4.3q0-.9.8-.9t.8.9v-1q0-.9.8-.9t.8.9v1q0-.8.8-.8t.8.8v1.400q0-.8.7-.8t.7.800v5.200q0 3.200-3.400 3.200q-2.400 0-3.600-1.600l-3.100-3.500q.9-1 2-.1l1.100 1z" fill="#cdcdcd"/><path d="M10.900 370.200v3.600M12.500 370.200v3.600" stroke="#8f8f8f" stroke-width="0.7"/>
<g fill="none" stroke="#cdcdcd"><circle cx="9.3" cy="391" r="3.6" stroke-width="1.25"/><path d="M12.300 394.100l3.700 3.800" stroke-width="2.200" stroke-linecap="round"/></g>
<rect x="8.600" y="412.500" width="11.700" height="11.300" rx="1.500" fill="#000"/>
<rect x="1.800" y="405" width="11.300" height="11.500" rx="1.600" fill="#e8965a"/>
<rect x="14" y="405.300" width="3" height="3" fill="#000"/><rect x="16.600" y="408" width="3.400" height="3.400" fill="#fff"/>
<path d="M3.500 417.400v4.300h3.800M2.300 418.700l1.200-1.300 1.200 1.300M6.200 420.500l1.200 1.200-1.200 1.200" stroke="#b5b5b5" stroke-width="0.7" fill="none"/>
<rect x="5" y="428.800" width="12.200" height="8.800" fill="#cfcfcf"/><circle cx="11" cy="433.100" r="2.650" fill="#505050"/>
<rect x="5" y="443.800" width="12.200" height="7.300" rx="0.600" fill="#cfcfcf"/><path d="M6.300 445.600h9.600M6.300 447.300h9.600" stroke="#555" stroke-width="0.9" stroke-dasharray="1 0.450" fill="none"/><path d="M8.300 449.200h5.600" stroke="#8a8a8a" stroke-width="1.100"/>
</svg>
<div id="dlg"><div id="dlgt"></div>
<div class="dl" style="left:4.4px;top:4.9px;font-size:8.5px;font-weight:bold;color:#f0f0f0;letter-spacing:0.2px">色相/彩度</div>
<svg class="abs" style="left:251.2px;top:6.4px" width="6" height="6"><path d="M0.3 0.3l5.2 5.2M5.5 0.3l-5.2 5.2" stroke="#f2f2f2" stroke-width="1.1" fill="none"/></svg>
<div class="dl" style="left:23.8px;top:31px">距離:</div>
<div class="sel" style="left:55.3px;top:27.5px;width:45.6px;height:14.6px"></div><div class="dl" style="left:59.8px;top:31px;color:#f0f0f0">Master</div>
<svg class="abs" style="left:92.4px;top:32.8px" width="6" height="4"><path d="M0.4 0.5l2.4 2.4l2.4-2.4" stroke="#eee" stroke-width="0.9" fill="none"/></svg>
<div class="btn" style="left:195.3px;top:27.5px;width:60.3px;height:14px"></div><div class="dl" style="left:195.3px;width:60.3px;text-align:center;top:30.8px">OK</div>
<div class="btn" style="left:195.3px;top:45.2px;width:60.3px;height:14.8px"></div><div class="dl" style="left:195.3px;width:60.3px;text-align:center;top:48.6px">リセット</div>
<div class="cb on" style="left:198.3px;top:66.4px;width:7px;height:7.4px"></div><div class="dl" style="left:207.8px;top:66.2px">プレヴュー</div>
<div class="dl" style="left:7.8px;top:48.8px">色相:</div>
<div class="inp" style="top:44.5px"><span>124</span></div>
<div class="trk" style="top:65.1px"><i style="width:151.0px"></i><b style="left:144.6px"></b></div>
<div class="dl" style="left:7.8px;top:83.3px">彩度:</div>
<div class="inp" style="top:79.0px"><span>47</span></div>
<div class="trk" style="top:99.6px"><i style="width:132.2px"></i><b style="left:125.8px"></b></div>
<div class="dl" style="left:7.8px;top:117.8px">明るさ:</div>
<div class="inp" style="top:113.5px"><span>0</span></div>
<div class="trk" style="top:134.1px"><i style="width:92.0px"></i><b style="left:85.6px"></b></div>
<div class="cb" style="left:10.8px;top:153.4px"></div><div class="dl" style="left:20.3px;top:153px">着色</div>
<div class="dl" style="left:66.3px;top:153px;color:#8c8c8c;letter-spacing:0.1px">Sample Hue:</div>
<div class="dl" style="left:131.6px;top:153px;color:#8c8c8c">+</div><div class="dl" style="left:145.2px;top:153px;color:#777">-</div>
<svg class="abs" style="left:0;top:0" width="262.8" height="189.4" viewBox="0 0 262.8 189.4">
<path d="M12 33l-1.700 1.800 1.700 1.800M15.800 33l1.700 1.800-1.700 1.800M10.800 34.800h6.400" fill="none" stroke="#c4c4c4" stroke-width="0.85"/>
<path d="M199.800 70.400l1.600 1.600 2.800-3.400" fill="none" stroke="#fff" stroke-width="1.200" stroke-linecap="round" stroke-linejoin="round"/>
<g transform="translate(119 157) rotate(45)"><path d="M-1.300 -7h2.600v2.800h1.400v1.600h-5.400v-1.600h1.400z" fill="#a0a0a0"/><path d="M-1.500 -2.600v7.400l1.500 2 1.500-2v-7.400" fill="none" stroke="#a0a0a0" stroke-width="0.850"/></g>
</svg>

</div>
<div id="status"><span class="abs" style="left:2.5px;top:3px;font-size:6.33px">rtb0.doubleverify.com <span style="letter-spacing:-1.05px">を待機しています</span>...</span></div>
</div></body></html>
